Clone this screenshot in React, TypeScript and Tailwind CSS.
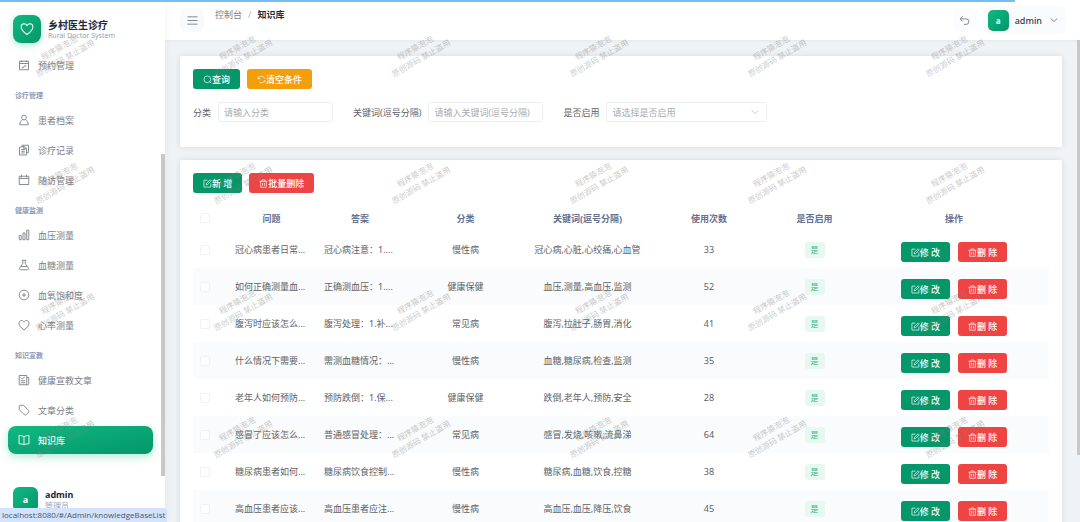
import React, { useState } from 'react';

type IconName =
  | 'calendar'
  | 'user'
  | 'records'
  | 'visit'
  | 'histogram'
  | 'flask'
  | 'plus'
  | 'heart'
  | 'news'
  | 'tag'
  | 'book'
  | 'search'
  | 'refresh'
  | 'edit'
  | 'trash'
  | 'menu'
  | 'back'
  | 'down';

const icons: Record<IconName, React.ReactNode> = {
  calendar: <path d="M3 4.500h18v17H3zM3 9h18M7.500 2v4.500M16.500 2v4.500M7 17.500h4l1.500-3.500H17" />,
  user: (
    <>
      <circle cx="12" cy="7" r="4.800" />
      <path d="M9 11.500c-3.500 1.500-5.500 5-5.500 10h17c0-5-2-8.500-5.500-10" />
    </>
  ),
  records: <path d="M8 6V2.500h13v15h-4M3 6.500l9-1.500 5 4v13H3zM6.500 11h7M6.500 14.500h7M6.500 18h7M11.500 5v4.500H17" />,
  visit: <path d="M2.500 4.500h19v16.500h-19zM2.500 9h19M7 2v5M17 2v5" />,
  histogram: <path d="M2.500 13h4v8.500h-4zM10 8h4v13.500h-4zM17.500 2.500h4v19h-4z" />,
  flask: <path d="M8 2.500h8M9.500 2.500V9L3 18.500c-1 1.500 0 3 1.500 3h15c1.500 0 2.500-1.500 1.500-3L14.500 9V2.500M6 15h12" />,
  plus: (
    <>
      <circle cx="12" cy="12" r="9.700" />
      <path d="M12 8v8M8 12h8" />
    </>
  ),
  heart: <path d="M12 21.500C5 16.500 2 13 2 8.500 2 5.500 4.200 3 7 3c2.200 0 4 1.200 5 3.200C13 4.200 14.800 3 17 3c2.800 0 5 2.500 5 5.500 0 4.500-3 8-10 13z" />,
  news: <path d="M2.500 3h15v18.500h-15zM17.500 7h4v12c0 1.500-.800 2.500-2 2.500h-3M5.500 7l3 3 5-4M5.500 13.500h9M5.500 17.500h9" />,
  tag: <path d="M2.500 4.500v6.800L13 21.800c.800.800 1.800.800 2.600 0l6-6c.800-.800.800-1.800 0-2.600L11 2.700H4.300c-1 0-1.800.800-1.800 1.800zM7 7.200h.500" />,
  book: <path d="M12 5.500c-2.500-2-6-2.500-10-2.500v16.500c4 0 7.500.500 10 2 2.500-1.500 6-2 10-2V3c-4 0-7.500.500-10 2.500zM12 5.500v16" />,
  search: (
    <>
      <circle cx="11.500" cy="11.500" r="9" />
      <path d="M18 18l4 4" />
    </>
  ),
  refresh: <path d="M3 4v6h6M3.500 9.500A9 9 0 0 1 20.500 9M21 20v-6M20.500 14.500A9 9 0 0 1 7 19.500" />,
  edit: <path d="M12 3H2.500v18.500H21V12M8.500 15.500l1-4L19 2l3 3-9.500 9.500z" />,
  trash: <path d="M1.500 6h21M8 6V2.500h8V6M4.500 6v16h15V6M9.500 10v8M14.500 10v8" />,
  menu: <path d="M1 4h22M1 12h22M1 20h22" />,
  back: <path d="M8 3L2.500 8.500 8 14M3 8.500h12.500a6 6 0 0 1 0 12H11" />,
  down: <path d="M2 7.500l10 9 10-9" />,
};

const Icon: React.FC<{ name: IconName; className?: string }> = ({ name, className = 'size-[11px]' }) => (
  <svg
    viewBox="0 0 24 24"
    fill="none"
    stroke="currentColor"
    strokeWidth="1.800"
    strokeLinejoin="round"
    aria-hidden="true"
    className={`shrink-0 ${className}`}
  >
    {icons[name]}
  </svg>
);

interface MenuItem {
  icon: IconName;
  label: string;
  active?: boolean;
}

interface MenuGroup {
  title?: string;
  items: MenuItem[];
}

const menu: MenuGroup[] = [
  { items: [{ icon: 'calendar', label: '预约管理' }] },
  {
    title: '诊疗管理',
    items: [
      { icon: 'user', label: '患者档案' },
      { icon: 'records', label: '诊疗记录' },
      { icon: 'visit', label: '随访管理' },
    ],
  },
  {
    title: '健康监测',
    items: [
      { icon: 'histogram', label: '血压测量' },
      { icon: 'flask', label: '血糖测量' },
      { icon: 'plus', label: '血氧饱和度' },
      { icon: 'heart', label: '心率测量' },
    ],
  },
  {
    title: '知识宣教',
    items: [
      { icon: 'news', label: '健康宣教文章' },
      { icon: 'tag', label: '文章分类' },
      { icon: 'book', label: '知识库', active: true },
    ],
  },
];

const rows = [
  { question: '冠心病患者日常...', answer: '冠心病注意：1....', type: '慢性病', keywords: '冠心病,心脏,心绞痛,心血管', count: 33 },
  { question: '如何正确测量血...', answer: '正确测血压：1....', type: '健康保健', keywords: '血压,测量,高血压,监测', count: 52 },
  { question: '腹泻时应该怎么...', answer: '腹泻处理：1.补...', type: '常见病', keywords: '腹泻,拉肚子,肠胃,消化', count: 41 },
  { question: '什么情况下需要...', answer: '需测血糖情况：...', type: '慢性病', keywords: '血糖,糖尿病,检查,监测', count: 35 },
  { question: '老年人如何预防...', answer: '预防跌倒：1.保...', type: '健康保健', keywords: '跌倒,老年人,预防,安全', count: 28 },
  { question: '感冒了应该怎么...', answer: '普通感冒处理：...', type: '常见病', keywords: '感冒,发烧,咳嗽,流鼻涕', count: 64 },
  { question: '糖尿病患者如何...', answer: '糖尿病饮食控制...', type: '慢性病', keywords: '糖尿病,血糖,饮食,控糖', count: 38 },
  { question: '高血压患者应该...', answer: '高血压患者应注...', type: '慢性病', keywords: '高血压,血压,降压,饮食', count: 45 },
];

const Button: React.FC<{ icon: IconName; color: string; children: React.ReactNode }> = ({ icon, color, children }) => (
  <button
    type="button"
    className={`inline-flex h-5 items-center justify-center rounded-[3px] px-[10px] font-medium whitespace-nowrap text-white ${color}`}
  >
    <Icon name={icon} className="size-[9px]" />
    {children}
  </button>
);

const Checkbox: React.FC<{ label: string }> = ({ label }) => (
  <input
    type="checkbox"
    aria-label={label}
    className="block size-[10px] appearance-none rounded-[2px] border border-[#f1f2f5] bg-white checked:bg-[#059669]"
  />
);

const Sidebar = () => (
  <aside className="relative flex w-[165px] shrink-0 flex-col bg-white shadow-[2px_0_8px_rgba(0,0,0,0.04)]">
    <div className="flex h-[51px] shrink-0 items-center gap-[7px] px-[13px] pt-[7px]">
      <div className="flex size-7 items-center justify-center rounded-lg bg-linear-to-br from-[#10b981] to-[#059669] text-white shadow-[0_2px_7px_rgba(16,185,129,0.35)]">
        <Icon name="heart" className="size-[14px]" />
      </div>
      <div className="whitespace-nowrap">
        <div className="text-[10px] leading-[12px] font-bold text-[#1e293b]">乡村医生诊疗</div>
        <div className="text-[7px] leading-[9px] text-[#94a3b8]">Rural Doctor System</div>
      </div>
    </div>

    <nav className="min-h-0 flex-1 overflow-hidden px-2">
      {menu.map((group, i) => (
        <div key={i}>
          {group.title && (
            <div className="flex h-[25px] items-center pt-[3px] pl-[7px] text-[7px] font-bold text-[#8c9ab5]">{group.title}</div>
          )}
          {group.items.map((item) => (
            <a
              key={item.label}
              href="#"
              className={`mr-1 mb-[2px] flex h-7 items-center gap-2 rounded-lg px-[10px] ${
                item.active
                  ? 'bg-linear-to-br from-[#10b981] to-[#059669] font-medium text-white shadow-[0_3px_8px_rgba(16,185,129,0.3)]'
                  : 'text-[#7b8088]'
              }`}
            >
              <Icon name={item.icon} className="size-3" />
              {item.label}
            </a>
          ))}
        </div>
      ))}
    </nav>

    <div className="flex h-[46px] shrink-0 gap-[7px] px-[13px] pt-[11px]">
      <div className="flex size-[25px] items-center justify-center rounded-md bg-linear-to-br from-[#10b981] to-[#059669] font-bold text-white">a</div>
      <div className="pt-[2px]">
        <div className="text-[9px] leading-[12px] font-bold text-[#1e293b]">admin</div>
        <div className="text-[8px] leading-[10px] text-[#94a3b8]">管理员</div>
      </div>
    </div>

    {/* scroll thumb */}
    <div className="absolute top-[154px] right-0 h-[322px] w-1 bg-[#c8c8c8]" />
  </aside>
);

const Header = () => (
  <header className="flex h-10 shrink-0 items-center bg-white pr-[14px] pl-[15px] shadow-[0_1px_3px_rgba(0,0,0,0.05)]">
    <button type="button" aria-label="菜单" className="flex size-6 items-center justify-center rounded-md bg-[#f8fafc] text-[#64748b]">
      <Icon name="menu" className="size-[11px]" />
    </button>
    <div className="ml-[11px] flex gap-[6px] self-start pt-2 leading-[13px]">
      <a href="#" className="text-[#7c818a]">
        控制台
      </a>
      <span className="text-[#b4b8c0]">/</span>
      <span className="font-bold text-[#1e293b]">知识库</span>
    </div>
    <button type="button" aria-label="返回" className="ml-auto flex size-6 items-center justify-center rounded-md bg-[#fbfcfd] text-[#64748b]">
      <Icon name="back" className="size-[11px]" />
    </button>
    <button type="button" className="ml-[7px] flex h-7 items-center gap-[6px] rounded-md bg-[#fafbfc] px-1 pr-2 text-[#334155]">
      <span className="flex size-[21px] items-center justify-center rounded-[5px] bg-linear-to-br from-[#10b981] to-[#059669] text-[8px] font-bold text-white">
        a
      </span>
      <span className="font-medium">admin</span>
      <Icon name="down" className="ml-[2px] size-2" />
    </button>
  </header>
);

const fieldClass = 'h-5 rounded-[3px] border border-[#eceef1] bg-white px-[5px] text-[9px] outline-none placeholder:text-[#a8abb2]';

const SearchCard = () => (
  <section className="h-[91px] shrink-0 rounded-[2px] bg-white p-[13px] shadow-[0_0_6px_rgba(0,0,0,0.1)]">
    <div className="flex gap-[7px]">
      <Button icon="search" color="bg-[#059669]">
        查询
      </Button>
      <Button icon="refresh" color="bg-[#f59e0b]">
        清空条件
      </Button>
    </div>
    <div className="mt-[13px] flex gap-5 text-[#606266]">
      <label className="flex items-center gap-[7px] whitespace-nowrap">
        分类
        <input type="text" placeholder="请输入分类" className={`w-[115px] ${fieldClass}`} />
      </label>
      <label className="flex items-center gap-[7px] whitespace-nowrap">
        关键词(逗号分隔)
        <input type="text" placeholder="请输入关键词(逗号分隔)" className={`w-[115px] ${fieldClass}`} />
      </label>
      <label className="flex items-center gap-[7px] whitespace-nowrap">
        是否启用
        <span className="relative">
          <select defaultValue="" className={`block w-[161px] appearance-none text-[#a8abb2] ${fieldClass}`}>
            <option value="">请选择是否启用</option>
            <option value="1">是</option>
            <option value="0">否</option>
          </select>
          <Icon name="down" className="pointer-events-none absolute top-[6px] right-2 size-2 text-[#a8abb2]" />
        </span>
      </label>
    </div>
  </section>
);

const TableCard = () => (
  <section className="shrink-0 rounded-[2px] bg-white p-[13px] shadow-[0_0_6px_rgba(0,0,0,0.1)]">
    <div className="flex gap-[7px]">
      <Button icon="edit" color="bg-[#059669]">
        新 增
      </Button>
      <Button icon="trash" color="bg-[#ef4444]">
        批量删除
      </Button>
    </div>
    <table className="mt-3 w-full table-fixed text-center text-[#606266]">
      <colgroup>
        <col className="w-[34px]" />
        <col className="w-[89px]" />
        <col className="w-[88px]" />
        <col className="w-[123px]" />
        <col className="w-[121px]" />
        <col className="w-[122px]" />
        <col className="w-[89px]" />
        <col className="w-[190px]" />
      </colgroup>
      <thead>
        <tr className="h-[26px] text-[#64708c]">
          <th className="pl-[7px]">
            <Checkbox label="全选" />
          </th>
          <th>问题</th>
          <th>答案</th>
          <th>分类</th>
          <th>关键词(逗号分隔)</th>
          <th>使用次数</th>
          <th>是否启用</th>
          <th>操作</th>
        </tr>
      </thead>
      <tbody>
        {rows.map((row) => (
          <tr key={row.question} className="h-[37px] whitespace-nowrap even:bg-[#f9fbfc]">
            <td className="pl-[7px]">
              <Checkbox label={row.question} />
            </td>
            <td className="pl-2 text-left">{row.question}</td>
            <td className="pl-2 text-left">{row.answer}</td>
            <td>{row.type}</td>
            <td>{row.keywords}</td>
            <td>{row.count}</td>
            <td>
              <span className="inline-flex h-4 items-center rounded-[3px] bg-[#e7f8f1] px-[6px] text-[8px] text-[#3db990]">是</span>
            </td>
            <td>
              <div className="flex justify-center gap-2 pt-[5px]">
                <Button icon="edit" color="bg-[#059669]">
                  修 改
                </Button>
                <Button icon="trash" color="bg-[#ef4444]">
                  删 除
                </Button>
              </div>
            </td>
          </tr>
        ))}
      </tbody>
    </table>
  </section>
);

const Watermark = () => (
  <div aria-hidden="true" className="pointer-events-none absolute inset-0 z-20 overflow-hidden">
    <div className="absolute -top-[11px] -left-[27px] grid auto-rows-[127px] grid-cols-[repeat(6,178px)]">
      {Array.from({ length: 24 }, (_, i) => (
        <div key={i} className="flex items-center justify-center">
          <div className="-rotate-30 text-center text-[8px] leading-[12px] whitespace-nowrap text-[#808080]/45">
            程序猿泡泡
            <br />
            原创源码 禁止盗用
          </div>
        </div>
      ))}
    </div>
  </div>
);

export default function App() {
  const [link] = useState('localhost:8080/#/Admin/knowledgeBaseList');

  return (
    <div className="relative flex h-screen overflow-hidden bg-[#eff3f6] font-['Noto_Sans','Noto_Sans_CJK_SC',sans-serif] text-[9px] leading-[13px]">
      <Sidebar />
      <div className="flex min-w-0 flex-1 flex-col">
        <Header />
        <main className="relative flex min-h-0 flex-1 flex-col gap-[13px] overflow-hidden pt-4 pr-[18px] pl-[15px]">
          <SearchCard />
          <TableCard />
          {/* scroll thumb */}
          <div className="absolute top-0 right-0 h-[415px] w-[3px] bg-[#c8c8c8]" />
        </main>
      </div>
      <div className="absolute top-0 left-0 z-10 h-[2px] w-[94%] bg-[#76bdf0]" />
      <Watermark />
      <div className="absolute bottom-0 left-0 z-30 h-[14px] rounded-tr-[3px] bg-[#d3e3fd] px-[2px] font-['Open_Sans',sans-serif] text-[8px] leading-[14px] text-[#4b5563]">
        {link}
      </div>
    </div>
  );
}
